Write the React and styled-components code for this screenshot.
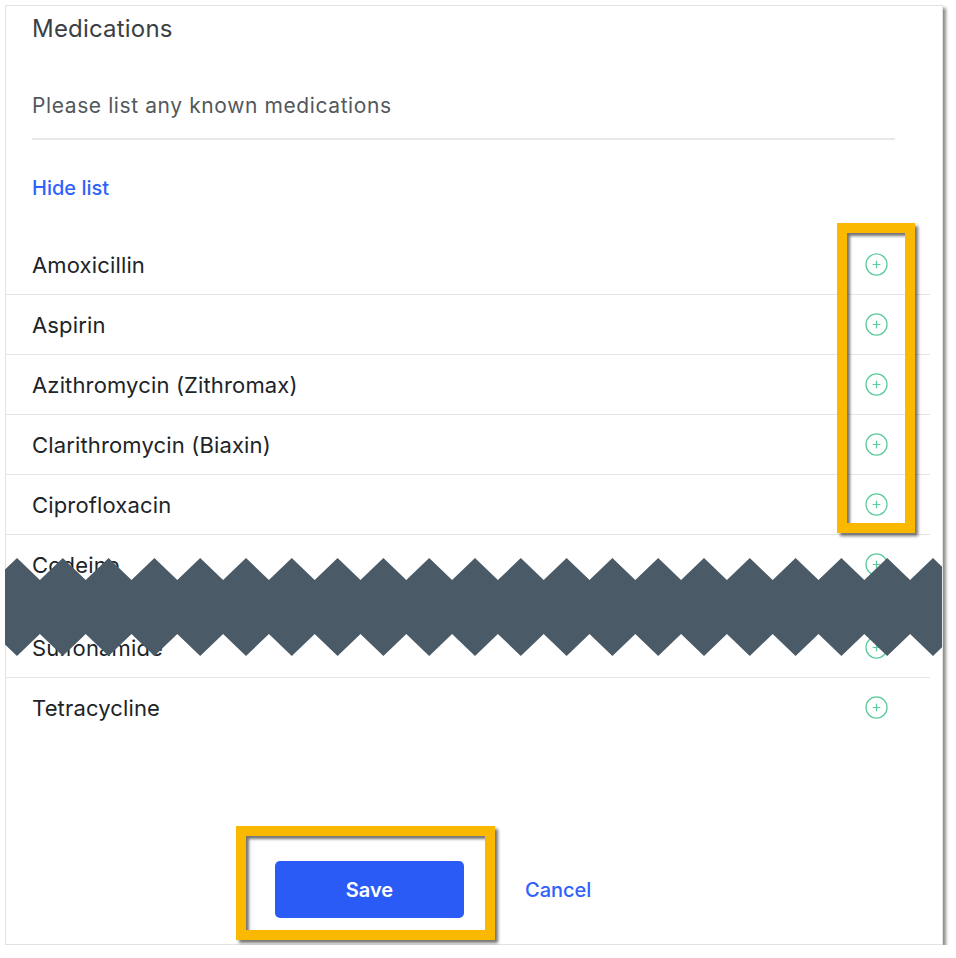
import styled, { createGlobalStyle } from 'styled-components';

const GlobalStyle = createGlobalStyle`
  html, body {
    margin: 0;
    padding: 0;
    background: #fff;
  }
  body {
    font-family: Inter, 'Noto Sans', 'Liberation Sans', sans-serif;
  }
`;

const Page = styled.div`
  padding: 5px 0 0 5px;
`;

const Card = styled.div`
  position: relative;
  box-sizing: border-box;
  width: 938px;
  height: 940px;
  background: #fff;
  border: 1px solid #e2e2e2;
  box-shadow: 3px 3px 3px rgba(0, 0, 0, 0.45);
  display: flex;
  flex-direction: column;
`;

const Header = styled.div`
  padding: 8px 47px 0 26px;
`;

const Title = styled.h2`
  margin: 0;
  font-size: 24px;
  line-height: 30px;
  font-weight: 400;
  letter-spacing: 0.2px;
  color: #3b4045;
`;

const Prompt = styled.p`
  margin: 48px 0 0;
  padding-bottom: 18px;
  border-bottom: 2px solid #e8e8e8;
  font-size: 21px;
  line-height: 28px;
  letter-spacing: 0.6px;
  color: #53585c;
`;

const TextLink = styled.a`
  display: inline-block;
  font-size: 20px;
  line-height: 26px;
  font-weight: 500;
  color: #2f62fb;
  text-decoration: none;
  cursor: pointer;
`;

const HideLink = styled(TextLink)`
  margin-top: 35px;
`;

const List = styled.ul`
  list-style: none;
  margin: 34px 12px 0 0;
  padding: 0;
`;

const Row = styled.li`
  box-sizing: border-box;
  height: 60px;
  padding: 0 42px 0 26px;
  display: flex;
  align-items: center;
  justify-content: space-between;
  border-bottom: 1px solid ${(p) => (p.last ? 'transparent' : '#e6e6e6')};
  font-size: 22px;
  letter-spacing: 0.15px;
  color: #202427;
`;

const AddButton = styled.button`
  border: none;
  background: none;
  padding: 0;
  width: 23px;
  height: 23px;
  display: flex;
  cursor: pointer;
`;

const Tear = styled.li`
  position: relative;
  height: 23px;
`;

const TearBand = styled.svg`
  position: absolute;
  left: -1px;
  top: -37px;
  width: 937px;
  height: 98px;
`;

const Footer = styled.div`
  margin-top: auto;
  padding: 0 0 26px 269px;
  display: flex;
  align-items: center;
  gap: 61px;
`;

const SaveButton = styled.button`
  width: 189px;
  height: 57px;
  border: none;
  border-radius: 5px;
  background: #2b5bf6;
  color: #fff;
  font-family: inherit;
  font-size: 20px;
  font-weight: 600;
  cursor: pointer;
`;

const Highlight = styled.div`
  position: absolute;
  box-sizing: border-box;
  left: ${(p) => p.x}px;
  top: ${(p) => p.y}px;
  width: ${(p) => p.w}px;
  height: ${(p) => p.h}px;
  border: 10px solid #fbb800;
  box-shadow: 3px 3px 3px rgba(0, 0, 0, 0.55), inset 3px 3px 3px rgba(0, 0, 0, 0.55);
  pointer-events: none;
`;

const PlusCircle = () => (
  <svg width="23" height="23" viewBox="0 0 24 24" fill="none" stroke="#5ccb9b" strokeWidth="1.3" strokeLinecap="round">
    <circle cx="12" cy="12" r="11" />
    <path d="M12 8.5v7M8.5 12h7" />
  </svg>
);

const zigzag = () => {
  const period = 45.8;
  const top = [];
  const bottom = [];
  for (let k = -1; k <= 21; k++) {
    const x = 12 + period * k;
    top.push(`${x},0`, `${x + period / 2},22`);
    bottom.push(`${x},98`, `${x + period / 2},76`);
  }
  return [...top, ...bottom.reverse()].join(' ');
};

const before = ['Amoxicillin', 'Aspirin', 'Azithromycin (Zithromax)', 'Clarithromycin (Biaxin)', 'Ciprofloxacin', 'Codeine'];
const after = ['Sulfonamide', 'Tetracycline'];

export default function App() {
  return (
    <Page>
      <GlobalStyle />
      <Card>
        <Header>
          <Title>Medications</Title>
          <Prompt>Please list any known medications</Prompt>
          <HideLink>Hide list</HideLink>
        </Header>
        <List>
          {before.map((name) => (
            <Row key={name}>
              {name}
              <AddButton aria-label={`Add ${name}`}>
                <PlusCircle />
              </AddButton>
            </Row>
          ))}
          <Tear>
            <TearBand viewBox="0 0 937 98">
              <polygon points={zigzag()} fill="#4a5a67" />
            </TearBand>
          </Tear>
          {after.map((name, i) => (
            <Row key={name} last={i === after.length - 1}>
              {name}
              <AddButton aria-label={`Add ${name}`}>
                <PlusCircle />
              </AddButton>
            </Row>
          ))}
        </List>
        <Footer>
          <SaveButton>Save</SaveButton>
          <TextLink>Cancel</TextLink>
        </Footer>
        <Highlight x={831} y={217} w={78} h={310} />
        <Highlight x={230} y={820} w={259} h={114} />
      </Card>
    </Page>
  );
}
